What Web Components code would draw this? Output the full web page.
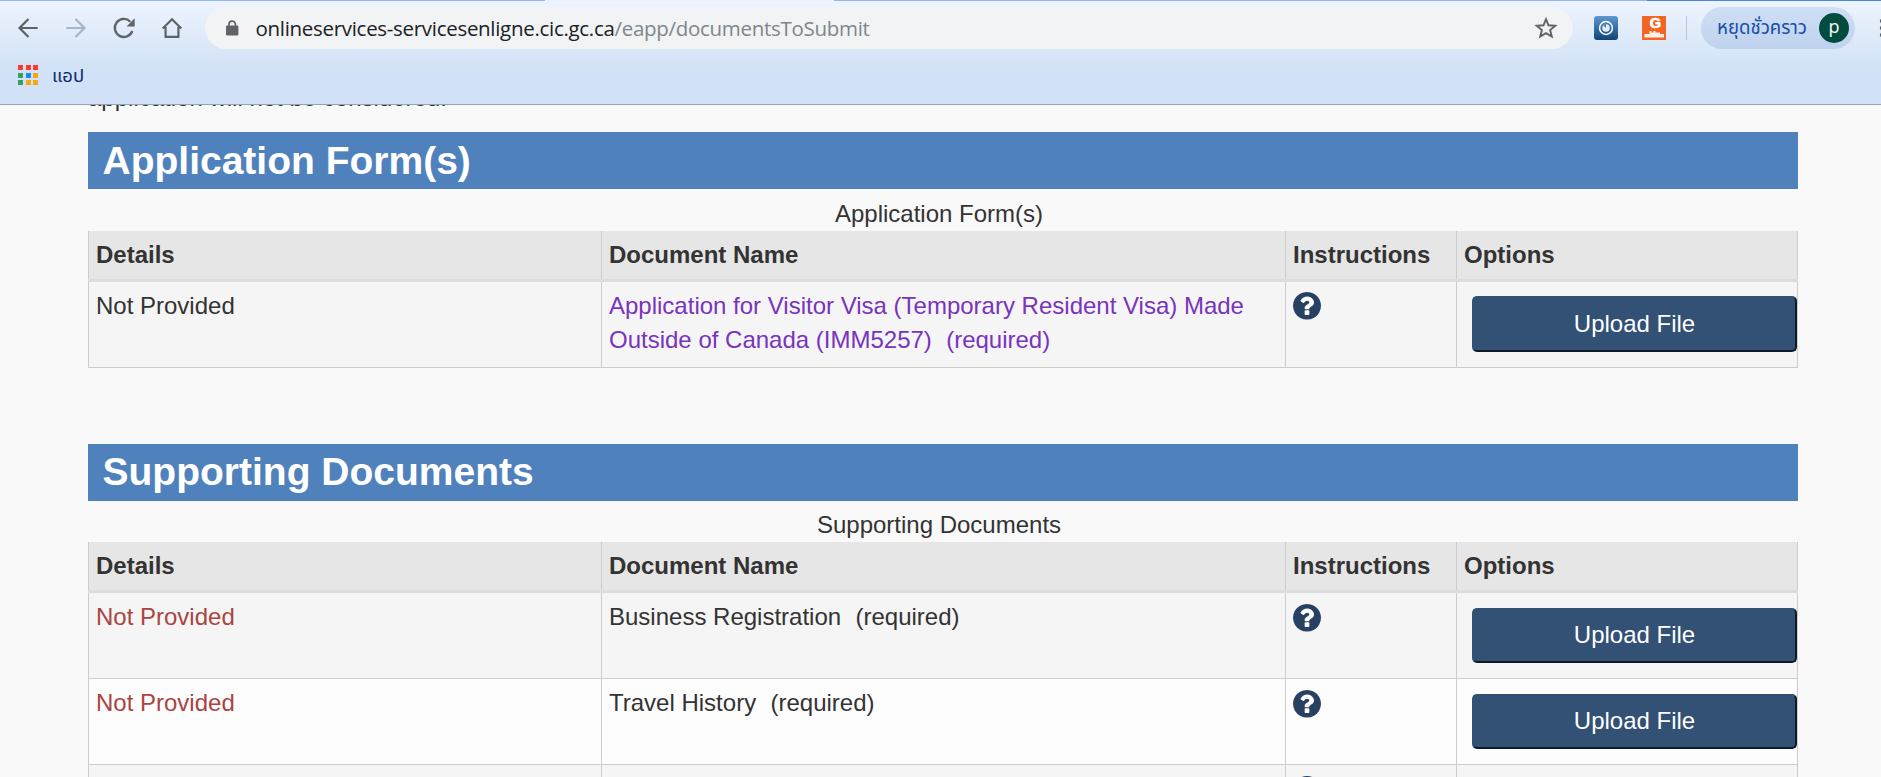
<!DOCTYPE html>
<html lang="th">
<head>
<meta charset="utf-8">
<title>Documents to submit</title>
<style>
  html, body {
    margin: 0;
    height: 777px;
    overflow: hidden;
    background: #f9f9f9;
    color: #333;
    font: 24px/34px "Liberation Sans", Arial, sans-serif;
  }
  body {
    display: flex;
    flex-direction: column;
  }
</style>
</head>
<body>
<browser-bar host="onlineservices-servicesenligne.cic.gc.ca" path="/eapp/documentsToSubmit"></browser-bar>
<page-content>
  <p slot="intro">application will not be considered.</p>
  <doc-section heading="Application Form(s)" heading-line="58" caption-height="42">
    <doc-row name="Application for Visitor Visa (Temporary Resident Visa) Made Outside of Canada (IMM5257)" link></doc-row>
  </doc-section>
  <doc-section heading="Supporting Documents" heading-line="55" caption-height="41">
    <doc-row name="Business Registration" missing></doc-row>
    <doc-row name="Travel History" missing even></doc-row>
    <doc-row></doc-row>
  </doc-section>
</page-content>

<script>
class BrowserBar extends HTMLElement {
  constructor() {
    super();

    const shadow = this.attachShadow({ mode: 'open' });
    const host = this.getAttribute('host') || '';
    const path = this.getAttribute('path') || '';

    const appColors = [
      '#fb3b30', '#fb3b30', '#fb3b30',
      '#34a05a', '#1e88f5', '#fba70a',
      '#34a05a', '#fba70a', '#fba70a',
    ];

    shadow.innerHTML = `
      <style>
        :host {
          display: block;
          flex: none;
          box-sizing: border-box;
          height: 105px;
          overflow: hidden;
          border-bottom: 1px solid #95a3b5;
          background: linear-gradient(#eef4fe, #d3e3f6 65px, #d1e2f8 75px);
          font: 18px/24px "Noto Sans Thai", "Noto Sans", "Open Sans", sans-serif;
        }
        .tabs {
          height: 1px;
          background: linear-gradient(90deg, #8fb8f2 545px, #e9f2fe 545px 834px, #8fb8f2 834px 1647px, #4886df 1647px);
        }
        .toolbar {
          display: flex;
          align-items: center;
          width: 1900px;
          height: 42px;
          margin-top: 6px;
        }
        svg {
          display: block;
          flex: none;
        }
        .nav {
          display: flex;
          gap: 24px;
          padding: 0 21px 0 16px;
        }
        .omnibox {
          display: flex;
          align-items: center;
          box-sizing: border-box;
          width: 1368px;
          height: 42px;
          padding: 0 15px 0 20px;
          border-radius: 21px;
          background: #f1f3f4;
        }
        .url {
          flex: 1;
          margin-left: 16.5px;
          white-space: nowrap;
          color: #202124;
          font: 20.5px/28px "Open Sans", "Noto Sans", sans-serif;
          letter-spacing: -0.3px;
        }
        .url span {
          color: #80868b;
        }
        .extensions {
          display: flex;
          gap: 24px;
          margin: 0 20px 0 21px;
        }
        .divider {
          width: 1px;
          height: 24px;
          margin-right: 14px;
          background: #b6c5da;
        }
        .profile {
          display: flex;
          align-items: center;
          justify-content: space-between;
          box-sizing: border-box;
          width: 154px;
          height: 42px;
          padding: 0 6px 0 16px;
          border-radius: 21px;
          background: linear-gradient(#cfdff4, #bfd2ee);
          color: #174ea6;
          font-size: 18.6px;
          white-space: nowrap;
        }
        .avatar {
          width: 30px;
          height: 30px;
          border-radius: 50%;
          background: #004d40;
          color: #fff;
          text-align: center;
          font: 18px/27px "Open Sans", sans-serif;
        }
        .menu {
          margin-left: 24px;
        }
        .bookmarks {
          display: flex;
          align-items: center;
          gap: 14px;
          height: 52px;
          padding-left: 18px;
          color: #0b2a6b;
        }
        .bookmarks span {
          padding-top: 2px;
          font-size: 18.5px;
        }
        .apps {
          display: grid;
          grid-template-columns: repeat(3, 5px);
          gap: 2.5px;
        }
        .apps i {
          height: 5px;
        }
      </style>
      <div class="tabs"></div>
      <div class="toolbar">
        <div class="nav">
          <svg width="24" height="24" fill="none" stroke="#5f6368" stroke-width="2.2"><path d="M21.700 12H3.700M12.500 3L3.500 12l9 9"/></svg>
          <svg width="24" height="24" fill="none" stroke="#a9b4c4" stroke-width="2.2"><path d="M2.300 12h18M11.500 3l9 9-9 9"/></svg>
          <svg width="24" height="24" fill="none" stroke="#5f6368" stroke-width="2.3"><path d="M20.300 15a9 9 0 1 1-2-9.300"/><path d="M22.700 2.300v8.200h-8.200z" fill="#5f6368" stroke="none"/></svg>
          <svg width="24" height="24" fill="none" stroke="#5f6368" stroke-width="2.200"><path d="M2.700 12.600L12 3.200l9.300 9.400M5.600 11v9.900h12.800V11"/></svg>
        </div>
        <div class="omnibox">
          <svg width="14" height="18"><path d="M4 7V5.300a3.200 3.200 0 0 1 6.400 0V7" fill="none" stroke="#5f6368" stroke-width="1.700"/><rect x="1" y="6.500" width="12.400" height="10" rx="1.300" fill="#5f6368"/></svg>
          <div class="url">${host}<span>${path}</span></div>
          <svg width="24" height="24" fill="none" stroke="#5f6368" stroke-width="1.900"><path d="M12 3.200l2.500 6.100 6.800.5-5.200 4.300 1.700 6.500-5.800-3.500-5.800 3.500 1.700-6.500-5.200-4.300 6.800-.5z"/></svg>
        </div>
        <div class="extensions">
          <svg width="24" height="24">
            <defs><linearGradient id="blue" x2="0" y2="1"><stop stop-color="#5c9ad2"/><stop offset="1" stop-color="#104373"/></linearGradient></defs>
            <rect width="24" height="24" rx="3" fill="url(#blue)"/>
            <circle cx="12" cy="12" r="6.400" fill="none" stroke="#fff" stroke-width="1.500"/>
            <circle cx="12" cy="12" r="3.800" fill="#e4eef7"/>
            <path d="M12 12V8l-3 1z" fill="#4179aa"/>
          </svg>
          <svg width="24" height="24">
            <rect width="24" height="24" fill="#f26522"/>
            <text x="13.300" y="12.300" text-anchor="middle" fill="#fff" stroke="#fff" stroke-width=".7" font-family="Liberation Sans" font-size="14.500" font-weight="700">G</text>
            <path d="M7.500 15h2v1.500h2V15h2v1.500H18V18h4v3.500H2.500V18h5z" fill="#fdf0e9"/>
          </svg>
        </div>
        <div class="divider"></div>
        <div class="profile"><span>หยุดชั่วคราว</span><div class="avatar">p</div></div>
        <svg class="menu" width="6" height="24" fill="#5f6368"><circle cx="3" cy="5" r="2.200"/><circle cx="3" cy="12" r="2.200"/><circle cx="3" cy="19" r="2.200"/></svg>
      </div>
      <div class="bookmarks">
        <div class="apps">${appColors.map((c) => `<i style="background:${c}"></i>`).join('')}</div>
        <span>แอป</span>
      </div>
    `;
  }
}

class PageContent extends HTMLElement {
  constructor() {
    super();

    const shadow = this.attachShadow({ mode: 'open' });

    shadow.innerHTML = `
      <style>
        :host {
          display: block;
          flex: 1;
          min-height: 0;
          overflow: hidden;
        }
        main {
          display: flow-root;
          width: 1710px;
          margin-left: 88px;
        }
        /* scrolled partly under the toolbar */
        ::slotted(p) {
          margin: -24px 0 17px;
        }
      </style>
      <main>
        <slot name="intro"></slot>
        <slot></slot>
      </main>
    `;
  }
}

class DocSection extends HTMLElement {
  constructor() {
    super();

    const shadow = this.attachShadow({ mode: 'open' });
    const heading = this.getAttribute('heading') || '';
    const headingLine = this.getAttribute('heading-line') || '56';
    const captionHeight = Number(this.getAttribute('caption-height')) || 42;

    shadow.innerHTML = `
      <style>
        :host {
          display: block;
          margin-bottom: 76px;
        }
        h2 {
          height: 57px;
          margin: 0;
          padding-left: 14.5px;
          background: #4f81bd;
          color: #fff;
          font-size: 39px;
          line-height: ${headingLine}px;
        }
        .caption {
          box-sizing: border-box;
          height: ${captionHeight}px;
          padding: ${captionHeight - 34}px 8px 0 0;
          text-align: center;
        }
        .head {
          display: grid;
          grid-template-columns: 513px 684px 171px 1fr;
          box-sizing: border-box;
          height: 51px;
          border-bottom: 3px solid #ddd;
          background: #e6e6e6;
          font-weight: 700;
        }
        .head div {
          padding: 7px 7px 0;
          border-left: 1px solid #ccc;
        }
        .head div:last-child {
          border-right: 1px solid #ccc;
        }
      </style>
      <h2>${heading}</h2>
      <div class="caption">${heading}</div>
      <div class="head">
        <div>Details</div>
        <div>Document Name</div>
        <div>Instructions</div>
        <div>Options</div>
      </div>
      <slot></slot>
    `;
  }
}

class DocRow extends HTMLElement {
  constructor() {
    super();

    const shadow = this.attachShadow({ mode: 'open' });
    const name = this.getAttribute('name') || '';
    const background = this.hasAttribute('even') ? '#fdfdfd' : '#f5f5f5';
    const statusColor = this.hasAttribute('missing') ? '#a94442' : '#333';
    const nameColor = this.hasAttribute('link') ? '#7834bc' : '#333';
    const top = this.hasAttribute('link') ? 14 : 15;

    shadow.innerHTML = `
      <style>
        :host {
          display: grid;
          grid-template-columns: 513px 684px 171px 1fr;
          box-sizing: border-box;
          height: 86px;
          border-bottom: 1px solid #ccc;
          background: ${background};
        }
        .cell {
          padding: 7px 7px 0;
          border-left: 1px solid #ccc;
        }
        .status {
          color: ${statusColor};
        }
        .name {
          padding-right: 30px;
          color: ${nameColor};
        }
        .required {
          margin-left: 1px;
        }
        .help {
          padding-top: ${top - 4}px;
        }
        .options {
          padding: ${top}px 0 0 15px;
          border-right: 1px solid #ccc;
        }
      </style>
      <div class="cell status">${name ? 'Not Provided' : ''}</div>
      <div class="cell name">${name ? `${name}&nbsp; <span class="required">(required)</span>` : ''}</div>
      <div class="cell help"><help-icon></help-icon></div>
      <div class="cell options">${name ? `<upload-button style="height: ${70 - top}px">Upload File</upload-button>` : ''}</div>
    `;
  }
}

class HelpIcon extends HTMLElement {
  constructor() {
    super();

    const shadow = this.attachShadow({ mode: 'open' });

    shadow.innerHTML = `
      <style>
        :host {
          display: block;
          width: 28px;
          height: 28px;
        }
        svg {
          display: block;
        }
      </style>
      <svg width="28" height="27.500" viewBox="-16 96 1536 1536" preserveAspectRatio="none">
        <circle cx="752" cy="864" r="700" fill="#fff"/>
        <path fill="#284162" d="M880 1344v-192q0-14-9-23t-23-9h-192q-14 0-23 9t-9 23v192q0 14 9 23t23 9h192q14 0 23-9t9-23zm256-672q0-88-55.500-163t-138.500-116-170-41q-243 0-371 213-15 24 8 42l132 100q7 6 19 6 16 0 25-12 53-68 86-92 34-24 86-24 48 0 85.500 26t37.500 59q0 38-20 61t-68 45q-63 28-115.500 86.500t-52.500 125.500v36q0 14 9 23t23 9h192q14 0 23-9t9-23q0-19 21.500-49.500t54.500-49.500q32-18 49-28.500t46-35 44.500-48 28-60.500 12.500-81zm384 192q0 209-103 385.500t-279.500 279.500-385.500 103-385.500-103-279.500-279.500-103-385.500 103-385.500 279.500-279.500 385.500-103 385.500 103 279.500 279.500 103 385.500z"/>
      </svg>
    `;
  }
}

class UploadButton extends HTMLElement {
  constructor() {
    super();

    const shadow = this.attachShadow({ mode: 'open' });

    shadow.innerHTML = `
      <style>
        :host {
          display: block;
          width: 325px;
        }
        button {
          display: block;
          width: 100%;
          height: 100%;
          padding: 0 0 1px;
          border: 2px solid;
          border-color: #335075 #0c1b2c #0c1b2c #335075;
          border-radius: 5px;
          background: #335075;
          color: #fff;
          font: inherit;
        }
      </style>
      <button><slot></slot></button>
    `;
  }
}

customElements.define('browser-bar', BrowserBar);
customElements.define('page-content', PageContent);
customElements.define('doc-section', DocSection);
customElements.define('help-icon', HelpIcon);
customElements.define('upload-button', UploadButton);
customElements.define('doc-row', DocRow);
</script>
</body>
</html>
